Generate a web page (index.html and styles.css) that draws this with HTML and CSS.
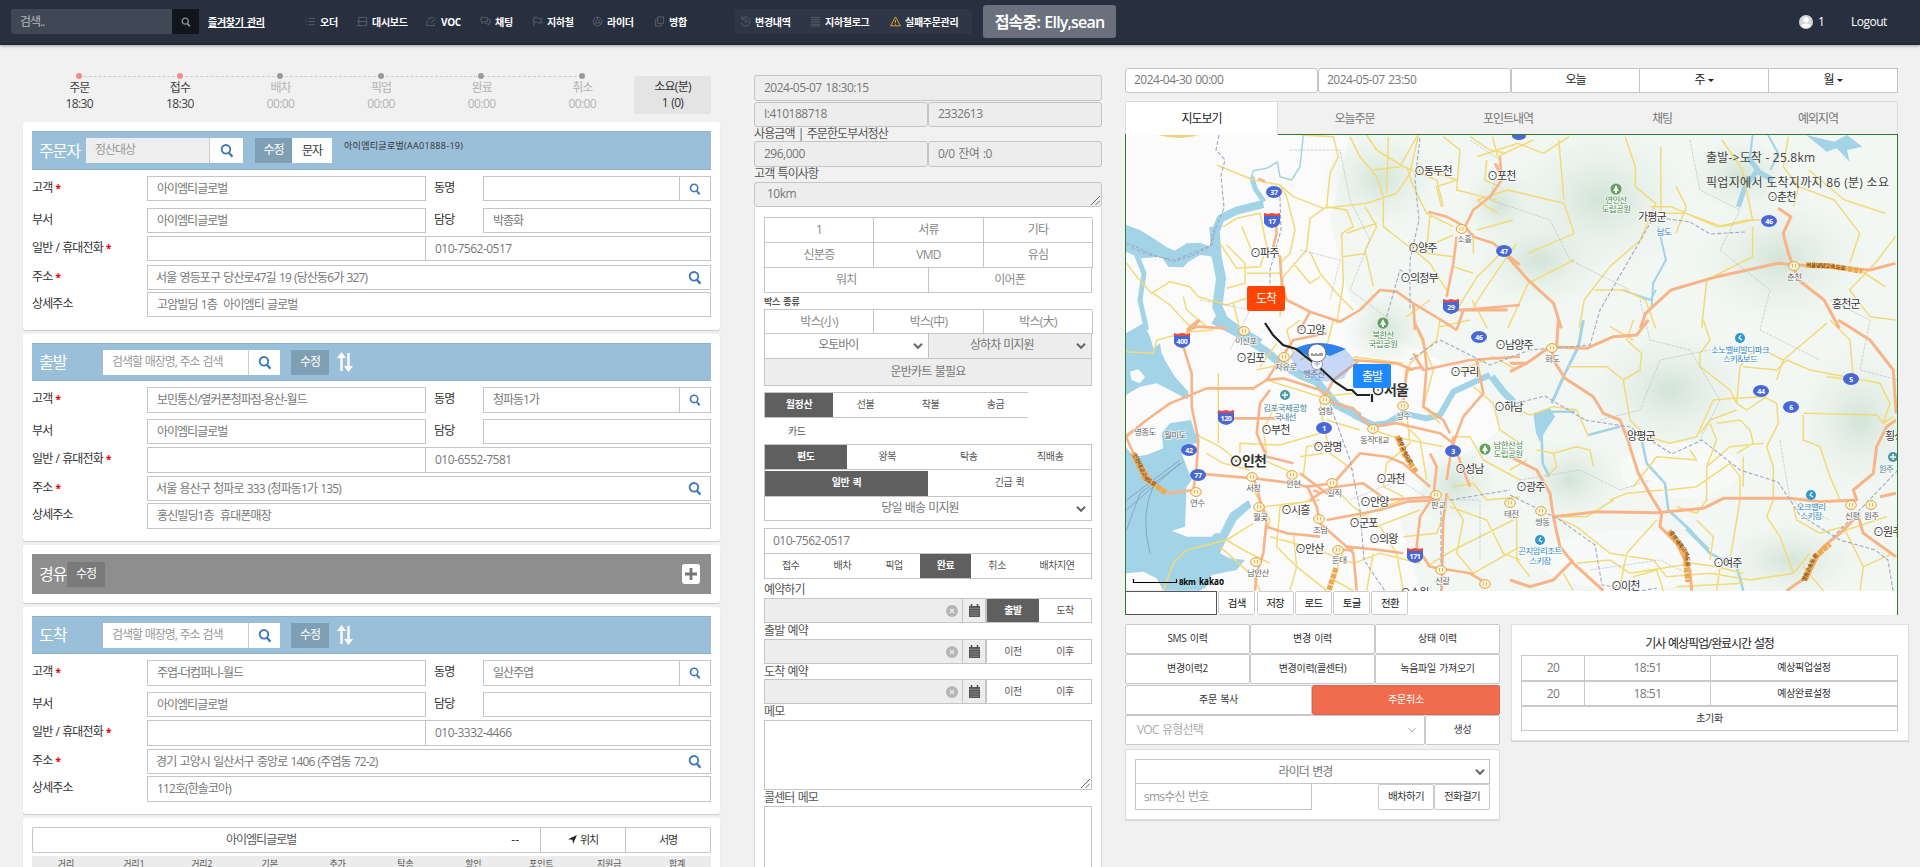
FILE: index.html
```html
<!DOCTYPE html>
<html lang="ko">
<head>
<meta charset="utf-8">
<title>주문 관리</title>
<link rel="stylesheet" href="styles.css">
</head>
<body>
<svg class="defs" width="0" height="0">
  <symbol id="mag" viewBox="0 0 16 16"><circle cx="6.8" cy="6.6" r="4.9" fill="none" stroke="currentColor" stroke-width="2.1"/><path d="M10.2 10.6L14.2 15" stroke="currentColor" stroke-width="2.6" fill="none"/></symbol>
  <symbol id="chev" viewBox="0 0 10 10"><path d="M1 2.8L5 6.8L9 2.8" fill="none" stroke="currentColor" stroke-width="2"/></symbol>
  <symbol id="swap" viewBox="0 0 16 20"><path d="M4.5 19V4M11.5 1V16" stroke="#fff" stroke-width="2.4" fill="none"/><path d="M0 6L4.5 0L9 6ZM7 14L11.5 20L16 14Z" fill="#fff"/></symbol>
  <symbol id="cal" viewBox="0 0 11 13"><path d="M0 2H11V13H0Z" fill="#555"/><path d="M2.5 0V3M8.5 0V3" stroke="#555" stroke-width="1.6"/><path d="M0 4.3H11M1 6.8H10M1 9H10M1 11.2H10" stroke="#aaa" stroke-width=".6"/></symbol>
  <symbol id="clr" viewBox="0 0 12 12"><circle cx="6" cy="6" r="6" fill="#b5b5b5"/><path d="M4 4L8 8M8 4L4 8" stroke="#eee" stroke-width="1.3"/></symbol>
  <symbol id="grip" viewBox="0 0 9 9"><path d="M0 9L9 0M4.5 9L9 4.5" stroke="#666" stroke-width="1" fill="none"/></symbol>
</svg>

<header class="top">
  <div class="top-search"><span>검색..</span><b><svg width="10" height="10"><use href="#mag"/></svg></b></div>
  <a class="fav">즐겨찾기 관리</a>
  <nav class="nav">
    <a><svg viewBox="0 0 12 12"><path d="M1 2.5H2M4 2.5H11M1 6H2M4 6H11M1 9.5H2M4 9.5H11"/></svg>오더</a>
    <a><svg viewBox="0 0 12 12"><path d="M2 1.5H10.500V10.500H2ZM0 6H11M0 10.500H2"/></svg>대시보드</a>
    <a><svg viewBox="0 0 12 12"><path d="M1 5V10.500H9V8M3 5V2H8M5 8L11 2.500"/></svg>VOC</a>
    <a><svg viewBox="0 0 12 12"><path d="M4.500 1.500H8V6H5L2 8V6H1V1.500ZM9 4H11V8H10V10L7 8H5"/></svg>채팅</a>
    <a><svg viewBox="0 0 12 12"><path d="M2 11V1.500H6L7 3H11L9.500 5L11 7.500H6L5 6.500H2"/></svg>지하철</a>
    <a><svg viewBox="0 0 12 12"><circle cx="6" cy="6" r="4.800"/><circle cx="6" cy="6" r="2"/><path d="M6 1V4M2 9L4.500 7M10 9L7.500 7"/></svg>라이더</a>
    <a><svg viewBox="0 0 12 12"><path d="M4 1H10.500V8H4ZM4 4H1.500V11H8V8"/></svg>병합</a>
  </nav>
  <nav class="nav sub">
    <a><svg viewBox="0 0 12 12"><path d="M2 3A5 5 0 1 1 1 7M2 0V3.500H5M6 3V6.500H8.500"/></svg>변경내역</a>
    <a><svg viewBox="0 0 12 12"><path d="M1 1.500H11M1 4H11M1 6.500H11M1 9H11M1 11H11"/></svg>지하철로그</a>
    <a class="warn"><svg viewBox="0 0 12 12"><path d="M6 1L11.300 10.700H.700ZM6 4.500V7.500M6 8.500V9.600"/></svg>실패주문관리</a>
  </nav>
  <div class="online">접속중: Elly,sean</div>
  <div class="user"><svg width="14" height="14" viewBox="0 0 14 14"><circle cx="7" cy="7" r="7" fill="#d5d7da"/><circle cx="7" cy="5" r="2.700" fill="#fff"/><path d="M2.500 11.500Q3 8.500 7 8.500Q11 8.500 11.500 11.500Q7 14 2.500 11.500Z" fill="#fff"/></svg>1</div>
  <div class="logout">Logout</div>
</header>

<main class="page">
<section class="left">
  <div class="steps">
    <div class="on"><i></i>주문<br><span>18:30</span></div>
    <div class="on"><i></i>접수<br><span>18:30</span></div>
    <div><i></i>배차<br><span>00:00</span></div>
    <div><i></i>픽업<br><span>00:00</span></div>
    <div><i></i>완료<br><span>00:00</span></div>
    <div><i></i>취소<br><span>00:00</span></div>
    <p>소요(분)<br>1 (0)</p>
  </div>

  <div class="card first">
    <div class="bar"><h2>주문자</h2>
      <div class="find gray"><span>정산대상</span><b><svg><use href="#mag"/></svg></b></div>
      <div class="edit">수정</div><div class="sms">문자</div><small>아이엠티글로벌(AA01888-19)</small></div>
    <div class="row r1"><label>고객 <em>*</em></label><div class="f a">아이엠티글로벌</div><label>동명</label><div class="f b"></div><div class="f s"><svg><use href="#mag"/></svg></div></div>
    <div class="row r2"><label>부서</label><div class="f a">아이엠티글로벌</div><label>담당</label><div class="f c">박종화</div></div>
    <div class="row r3"><label>일반 / 휴대전화 <em>*</em></label><div class="f a"></div><div class="f d n">010-7562-0517</div></div>
    <div class="row r4"><label>주소 <em>*</em></label><div class="f e">서울 영등포구 당산로47길 19 (당산동6가 327)<svg><use href="#mag"/></svg></div></div>
    <div class="row r5"><label>상세주소</label><div class="f e g">고암빌딩 1층&nbsp; 아이엠티 글로벌</div></div>
  </div>

  <div class="card">
    <div class="bar"><h2 class="w">출발</h2>
      <div class="find"><span>검색할 매장명, 주소 검색</span><b><svg><use href="#mag"/></svg></b></div>
      <div class="edit e2">수정</div><svg class="swap"><use href="#swap"/></svg></div>
    <div class="row r1"><label>고객 <em>*</em></label><div class="f a">보민통신/옆커폰청파점-용산-월드</div><label>동명</label><div class="f b">청파동1가</div><div class="f s"><svg><use href="#mag"/></svg></div></div>
    <div class="row r2"><label>부서</label><div class="f a">아이엠티글로벌</div><label>담당</label><div class="f c"></div></div>
    <div class="row r3"><label>일반 / 휴대전화 <em>*</em></label><div class="f a"></div><div class="f d n">010-6552-7581</div></div>
    <div class="row r4"><label>주소 <em>*</em></label><div class="f e">서울 용산구 청파로 333 (청파동1가 135)<svg><use href="#mag"/></svg></div></div>
    <div class="row r5"><label>상세주소</label><div class="f e g">홍신빌딩1층&nbsp; 휴대폰매장</div></div>
  </div>

  <div class="card via">
    <div class="bar grey"><h2>경유</h2><div class="edit">수정</div>
      <svg class="plus" viewBox="0 0 18 20"><rect width="18" height="20" rx="3" fill="#fff"/><path d="M9 4V16M3 10H15" stroke="#777" stroke-width="2.800"/></svg></div>
  </div>

  <div class="card">
    <div class="bar"><h2 class="w">도착</h2>
      <div class="find"><span>검색할 매장명, 주소 검색</span><b><svg><use href="#mag"/></svg></b></div>
      <div class="edit e2">수정</div><svg class="swap"><use href="#swap"/></svg></div>
    <div class="row r1"><label>고객 <em>*</em></label><div class="f a">주엽-더컴퍼니-월드</div><label>동명</label><div class="f b">일산주엽</div><div class="f s"><svg><use href="#mag"/></svg></div></div>
    <div class="row r2"><label>부서</label><div class="f a">아이엠티글로벌</div><label>담당</label><div class="f c"></div></div>
    <div class="row r3"><label>일반 / 휴대전화 <em>*</em></label><div class="f a"></div><div class="f d n">010-3332-4466</div></div>
    <div class="row r4"><label>주소 <em>*</em></label><div class="f e">경기 고양시 일산서구 중앙로 1406 (주엽동 72-2)<svg><use href="#mag"/></svg></div></div>
    <div class="row r5"><label>상세주소</label><div class="f e g">112호(한솔코아)</div></div>
  </div>

  <div class="card last">
    <div class="owner"><div class="nm">아이엠티글로벌</div><div class="dash">--</div><div class="bt"><svg width="9" height="9" viewBox="0 0 9 9"><path d="M9 0L5 9L4.500 4.800L0 4.200Z" fill="#222"/></svg> 위치</div><div class="bt">서명</div></div>
    <div class="cols"><span>거리</span><span>거리1</span><span>거리2</span><span>기본</span><span>추가</span><span>탁송</span><span>할인</span><span>포인트</span><span>지원금</span><span>합계</span></div>
  </div>
</section>

<section class="mid">
  <div class="ro n">2024-05-07 18:30:15</div>
  <div class="two"><div class="ro n">I:410188718</div><div class="ro n">2332613</div></div>
  <div class="lb l1">사용금액 | 주문한도부서정산</div>
  <div class="two t2"><div class="ro n">296,000</div><div class="ro n">0/0 잔여 :0</div></div>
  <div class="lb l2">고객 특이사항</div>
  <div class="ro n area0">10km<svg><use href="#grip"/></svg></div>
  <div class="panel">
    <div class="g3"><span>1</span><span>서류</span><span>기타</span><span>신분증</span><span>VMD</span><span>유심</span></div>
    <div class="g2"><span>워치</span><span>이어폰</span></div>
    <div class="tiny">박스 종류</div>
    <div class="g3 box"><span>박스(小)</span><span>박스(中)</span><span>박스(大)</span></div>
    <div class="sels"><div>오토바이<svg><use href="#chev"/></svg></div><div class="dis">상하차 미지원<svg><use href="#chev"/></svg></div></div>
    <div class="cart">운반카트 불필요</div>
    <div class="seg pay"><span class="k">월정산</span><span>선불</span><span>착불</span><span>송금</span></div>
    <div class="card-pay">카드</div>
    <div class="seg trip"><span class="k">편도</span><span>왕복</span><span>탁송</span><span>직배송</span></div>
    <div class="seg quick"><span class="k">일반 퀵</span><span>긴급 퀵</span></div>
    <div class="sel">당일 배송 미지원<svg><use href="#chev"/></svg></div>
    <div class="phone n">010-7562-0517</div>
    <div class="seg stat"><span>접수</span><span>배차</span><span>픽업</span><span class="k">완료</span><span>취소</span><span>배차지연</span></div>
    <div class="lb">예약하기</div>
    <div class="bk"><div class="inp"><svg class="c"><use href="#clr"/></svg></div><div class="cal"><svg><use href="#cal"/></svg></div><div class="seg"><span class="k">출발</span><span>도착</span></div></div>
    <div class="lb">출발 예약</div>
    <div class="bk"><div class="inp"><svg class="c"><use href="#clr"/></svg></div><div class="cal"><svg><use href="#cal"/></svg></div><div class="seg"><span>이전</span><span>이후</span></div></div>
    <div class="lb">도착 예약</div>
    <div class="bk"><div class="inp"><svg class="c"><use href="#clr"/></svg></div><div class="cal"><svg><use href="#cal"/></svg></div><div class="seg"><span>이전</span><span>이후</span></div></div>
    <div class="lb">메모</div>
    <div class="ta"><svg><use href="#grip"/></svg></div>
    <div class="lb">콜센터 메모</div>
    <div class="ta ta2"></div>
  </div>
</section>

<section class="right">
  <div class="dates"><div class="dt n">2024-04-30 00:00</div><div class="dt n">2024-05-07 23:50</div><div class="db">오늘</div><div class="db">주<i></i></div><div class="db">월<i></i></div></div>
  <div class="tabs"><span class="act">지도보기</span><span>오늘주문</span><span>포인트내역</span><span>채팅</span><span>예외지역</span></div>
  <div class="mapbox">
  <svg class="map" viewBox="1126 135 771 456">
    <defs>
      <radialGradient id="gr"><stop offset="0" stop-color="#d3e4d8"/><stop offset="1" stop-color="#e6f0e9" stop-opacity="0"/></radialGradient>
      <symbol id="jc" viewBox="0 0 12 10"><ellipse cx="6" cy="5" rx="5.300" ry="4.400" fill="#fff3d5" stroke="#d5a545"/><path d="M4.500 3V6.500M7.500 3V6.500" stroke="#d5a545" stroke-width=".8"/></symbol>
    </defs>
    <rect x="1125" y="134" width="773" height="457" fill="#fafbfa"/>
    <path d="M1350 134L1898 134V591H1420L1400 520L1440 470L1500 430L1480 380L1400 340L1350 300L1330 220Z" fill="#f2f7f3"/>
    <g fill="url(#gr)">
      <ellipse cx="1600" cy="200" rx="95" ry="75"/><ellipse cx="1380" cy="180" rx="60" ry="50"/><ellipse cx="1540" cy="260" rx="70" ry="50"/><ellipse cx="1670" cy="390" rx="85" ry="65"/><ellipse cx="1780" cy="260" rx="90" ry="65"/><ellipse cx="1860" cy="420" rx="65" ry="75"/><ellipse cx="1570" cy="480" rx="55" ry="45"/><ellipse cx="1384" cy="330" rx="42" ry="38"/><ellipse cx="1455" cy="485" rx="45" ry="40"/><ellipse cx="1790" cy="560" rx="70" ry="40"/><ellipse cx="1500" cy="205" rx="40" ry="40"/><ellipse cx="1740" cy="175" rx="55" ry="40"/>
    </g>
    <ellipse cx="1630" cy="560" rx="90" ry="30" fill="#fafbfa" opacity=".7"/><ellipse cx="1680" cy="470" rx="60" ry="28" fill="#fafbfa" opacity=".6"/>
    <path d="M1155 134Q1180 142 1202 134" fill="#ecd27a"/>

    <g transform="translate(1120 130) scale(.33333)" class="v" fill="none" stroke="#a2d3e6">
      <path fill="#a2d3e6" stroke="none" d="M18 285L60 300L100 325L140 352L165 362L200 340L240 338L272 350L272 378L240 375L205 395L190 412L145 410L125 380L60 385L18 365Z"/>
      <path stroke-width="8" d="M282 380L285 310L302 265L350 242L430 222"/><path stroke-width="5" d="M432 215L405 175L395 140"/>
      <path stroke-width="1.500" d="M395 140L400 122L440 115L472 96L480 140L515 150L540 110L550 15"/>
      <path stroke-width="10" d="M283 290L290 380L303 445L292 530L310 570L350 600L420 640"/><path stroke-width="5" d="M50 375L72 430L60 510L80 600"/>
      <path d="M20 340L60 355L100 375L160 395L220 375L270 350L285 290" stroke="#a08fb0" stroke-width=".8" stroke-dasharray="3 2"/>
    </g>
    <g transform="translate(1120 320) scale(.33333)" class="v" fill="none" stroke="#a2d3e6">
      <path fill="#a2d3e6" stroke="none" d="M18 40L70 10L90 50L100 85L120 70L125 100L140 130L165 170L205 215L200 255L225 340L240 345L230 370L200 375L185 400L200 440L215 480L200 500L195 620L155 632L200 650L275 650L305 615L330 580L385 540L395 560L350 600L318 660L300 700L330 715L375 720L350 750L275 765L260 800L240 812H18Z"/>
      <path fill="#fafbfa" stroke="none" d="M18 225L60 200L110 190L160 215L205 240L212 300L150 310L125 340L130 385L80 405L40 410L18 380ZM30 155L55 148L75 170L60 190L35 180ZM18 760L70 755L110 775L130 812H18ZM200 500L265 505L330 580L300 640L200 640Z"/>
      <path stroke-width="8" d="M280 0L350 38L440 95L480 130L540 165L590 185L650 255L720 290"/><path stroke-width="6" d="M700 285L760 315L800 310L850 280L920 295L960 285L1000 215L1080 178L1110 165"/><path stroke-width="7" d="M1115 170L1150 215L1180 245"/>
      <path d="M20 540L180 420M20 570L180 430M20 630L60 520L190 425M90 700Q60 580 100 500" stroke="#7f9cc0" stroke-width=".8"/>
    </g>
    <g transform="translate(1510 320) scale(.33333)" class="v" fill="none" stroke="#a2d3e6">
      <path stroke-width="3" d="M220 0L205 80L165 160L125 250"/><path fill="#a2d3e6" stroke="none" d="M70 280L120 265L135 290L105 335L90 365L78 340Z"/><path stroke-width="2.500" d="M95 350L98 430L118 470M125 275L195 275M235 345L330 320"/><path stroke-width="2.500" d="M395 360L410 430L465 490L475 570L540 630L600 700L680 740L700 812"/><path stroke-width="4" d="M530 625L595 690"/>
    </g>
    <g transform="translate(1120 0) scale(.5102 .33333)" class="v" fill="none" stroke="#a2d3e6">
      <path stroke-width="5" d="M1230 470L1250 510L1225 560L1212 620M1245 510L1280 540"/><path stroke-width="2" d="M1240 405L1235 470M1270 405L1290 460L1275 510"/><path fill="#a2d3e6" stroke="none" d="M1345 405L1400 425L1425 405L1455 440L1425 450L1430 485L1405 445L1385 455Z"/><path stroke-width="2" d="M985 870L1040 900L1050 870M1055 680L1070 780L1045 850L1042 920"/>
    </g>

    <g class="v yl" transform="translate(1120 130) scale(.33333)">
      <path d="M20 400L50 440L95 490L150 455L210 470L235 500L320 525L380 505M100 490L150 525L210 590M190 500L200 540L260 590M290 105L400 150L480 165L520 200L610 235L740 220L830 190L870 130L895 15M545 15L640 20L655 80L630 130L620 230L570 265L560 360L525 400L490 440L480 560M690 20L720 80L770 140L790 200L790 290L860 345L920 350L1000 315M740 15L770 60L850 110L950 150L970 230M800 190L805 20M860 110L880 170L920 250L1000 290M735 230L770 290L735 360L760 470M620 230L680 240L700 290L665 310L670 460L650 580M480 165L500 200L525 300L510 370L480 400M310 290L350 265L420 250L440 350L420 410L350 415L300 340M320 345L375 400L375 460L320 475M480 430L380 430M570 365L600 430L650 490L700 540M520 400L570 460L600 440M870 350L930 400L960 450L980 480M970 20L1020 60L1010 180L1130 210M1050 20L1110 60L1160 70M1100 90L1095 150L1140 170M890 20L840 110L760 120M930 250L920 370L1000 380M1060 310L1060 370M1190 340L1120 440L1060 530M770 280L680 310M670 380L740 370M340 520L360 600M365 290L395 360M1000 410L1060 430M860 560L930 510"/>
    </g>
    <g class="v yl" transform="translate(1120 320) scale(.33333)">
      <path d="M18 95L100 100L110 60L210 35L280 30M18 345L80 300M240 350L300 380L350 420L420 415L520 460M295 160L295 370M360 400L360 370L480 375L600 340M540 0L500 30L520 100L500 130L410 150M420 140L470 70M440 180L600 230L700 220M600 240L610 310L630 400L700 450M550 470L560 380L610 370M470 250L430 330L440 400M640 0L620 80L540 120M850 220L870 130L950 60L960 0M700 110L850 130M960 20L1050 0M1000 160L1120 110L1190 150M880 0L940 150L910 260L960 310M860 280L870 370L800 430L790 500L850 530M840 300L900 360L920 480M1060 200L1120 250L1140 330L1200 370M1000 350L1050 350L1090 420L1200 480M760 330L820 350L970 380M1000 500L1060 490L1100 540L1200 530M980 520L1030 600L1010 700L1060 760L1200 680M450 650L560 680L620 700L700 730M520 640L530 740L620 812M580 540L480 560L470 680L530 740L510 812M430 560L600 540M300 680L400 770L420 812M160 730L200 690L320 660L400 610M320 660L370 690L450 730M130 812L160 730M260 400L310 430L390 450M640 500L700 560L780 620L830 700L850 812M700 730L780 700L900 730M700 600L790 560L850 540M670 690L640 780L700 812M390 490L450 600L430 660M770 620L900 570M850 650L950 640L980 560M990 560L1100 600L1150 700L1200 720M920 740L1000 690L1180 600M620 300L720 330M610 400L540 410M760 700L740 812"/>
    </g>
    <g class="v yl" transform="translate(1510 320) scale(.33333)">
      <path d="M0 260L60 285L130 260L200 270L235 350M175 140L290 140L340 180L360 300L410 350L480 370L560 350L610 240L670 235L760 230L800 250L805 310L770 380L790 440L790 540L770 590L810 650L850 760M370 0L350 60L395 100L390 150L340 180M300 20L370 60M580 0L600 60L570 100L570 140L660 210L680 250L690 140L740 80L820 120L950 10M700 140L800 150L830 120L900 150L1110 190L1140 250L1120 310M960 0L1020 60L1030 180L950 170M800 180L820 120M880 280L1100 285L1120 310L1150 290M880 285L880 360L930 380L960 470L990 540M600 310L620 360L590 440L660 380L760 370M620 310L690 300L720 330L730 370L680 400M570 340L600 300L680 270M590 440L590 540L560 580L500 560M470 510L560 500L660 430L690 470L690 540L660 720M300 540L350 520L460 510M370 500L440 410L560 420L540 390M130 590L200 620L300 700L430 720L470 770L600 760L720 780L850 760L900 700M200 730L300 720L360 760L550 730L620 740L700 760M330 800L350 700L440 600M130 400L200 380L240 390L250 440M110 470L140 440L130 400L80 390M20 590L20 720L60 770M560 600L610 650L600 720M620 812L630 740M850 560L860 600L930 640L1000 620L1060 740L1050 812M880 740L940 812M1060 740L1150 700M370 770L440 750L460 812M680 250L710 270L770 230M150 590L230 590L310 540M0 450L50 420M700 410L700 500M980 640L1130 590M160 760L190 812M500 800L700 790"/>
    </g>
    <g class="v yl" transform="translate(1120 0) scale(.5102 .33333)">
      <path d="M700 470L780 430L830 460L880 410M730 410L740 470L810 420M740 640L700 600L760 570L870 610L890 700L800 760M870 600L860 420M990 410L1010 500L1010 560L1050 610L1020 720L960 800L910 900L900 985M1060 440L1060 560L1060 640L1110 640L1180 680L1240 660L1220 510L1180 420M1040 620L1080 620L1140 660L1170 680L1230 660L1270 660M1300 500L1330 560L1320 620M1300 500L1310 410M1240 680L1240 770L1150 840L1140 985M1090 560L1110 620L1090 700M1330 560L1400 600L1450 700L1430 790M1350 510L1420 600L1500 640M1520 710L1480 790L1430 870L1470 950L1520 960M1450 810L1500 860M690 900L720 985M930 870L990 870L1030 900L1050 985M760 740L700 830L660 930M890 780L800 850L760 985M700 690L770 660M630 620L620 560L660 540L600 510"/>
    </g>
    <g class="v or" transform="translate(1120 130) scale(.33333)">
      <path d="M465 250L470 310L460 350L480 380L485 460L500 510L570 545L660 575L720 540L780 480L830 485L880 520L980 580L1010 600M925 245L980 260L1035 290L1060 320L1120 340L1200 405M1035 290L1060 240L1110 200L1145 150L1140 80M1010 320L1000 400L980 500M880 520L885 600M1200 525L1030 540L1010 600M235 570L200 600M570 545L540 600M415 145L435 155"/>
    </g>
    <g class="v or" transform="translate(1120 320) scale(.33333)">
      <path d="M200 35L230 20L320 25M190 80L215 160L215 260L235 360L230 440L220 510L150 520L100 490L40 400L18 350L80 300L150 250L260 205L400 205L440 180L490 175L600 210L640 250L700 265L750 320L830 310L960 340L1000 370L1030 450L1050 500M230 460L400 475L520 490L560 500L640 490L720 400L800 410L850 430L930 500M330 295L500 295M560 495L590 560L600 610L680 680L700 700L710 812M400 470L420 540L440 600L430 700L410 760L405 812M540 460L620 520L650 500L730 490L800 540L950 530M620 600L780 570L860 545L960 540M930 400L950 440L940 530L900 590L890 680L930 740L1050 760L1100 790M680 680L780 690L850 700M885 10L910 60L920 140L910 260L970 300L990 340M880 150L830 130L700 120M880 100L910 150L1050 120L1200 110M850 240L860 150L910 140M980 520L970 600L965 812M440 620L500 640L600 650M570 540L600 520M450 210L420 250L410 340L440 410L520 430M440 180L520 60L620 40M610 240L640 180L720 120M240 0L210 30M0 355L18 350M1000 370L1030 290L1090 220L1070 120M1000 350L980 480M650 690L700 690M640 500L600 520L580 510"/>
    </g>
    <g class="v or big" transform="translate(1510 320) scale(.33333)">
      <path d="M0 155L50 130L120 80L230 85L310 50L380 45L415 0M125 80L130 120L165 175L250 230L280 280L330 300L350 350L385 460L430 540L455 580L450 620L500 670L540 750L545 812M145 0L140 80M0 410L80 450L120 520L130 590L260 575L440 578L580 565L640 535L840 535L930 545L1040 540L1030 510L1090 460L1100 380L1130 320L1158 300M1110 530L1158 520M985 0L1080 60L1150 150L1158 280M130 590L150 680L190 730L280 812M190 720L130 780L60 800L0 780M1040 590L990 640L940 680L890 770L830 812M1045 590L1060 640L1158 710M0 130L50 130"/>
    </g>
    <g class="v or big" transform="translate(1120 0) scale(.5102 .33333)">
      <path d="M760 770L800 840L850 910L865 985M1520 790L1470 810L1330 795L1290 790L1170 830L1080 870L1030 940L1020 985M1290 625L1315 650L1300 700L1310 760L1330 840L1380 900L1410 985M735 490L745 520M640 930L700 930L760 930"/>
    </g>
    <g class="v rail">
      <path d="M1219 135L1216 150L1225 160L1221 175L1224 208L1215 230L1212 245L1175 260L1150 255L1130 247" stroke="#888"/>
      <path d="M1420 138L1415 180L1419 220L1410 260L1410 310M1280 197L1281 230L1270 270L1270 300M1330 405L1350 460L1360 510L1364 560L1385 591M1441 505V591M1410 360L1440 340L1490 365L1530 350M1510 495L1560 520L1595 545L1602 585L1640 591L1657 588M1585 420L1630 427L1672 454L1702 440L1740 470L1778 482L1800 515L1840 540L1875 550L1888 560L1893 591M1380 340L1400 270L1425 285M1655 215L1600 310L1590 345L1530 350M1655 217L1690 222L1710 234L1745 232M1510 405L1545 396L1585 420M1898 470L1850 520L1830 540M1450 500L1510 490"/>
    </g>
    <g class="v bnd"><path d="M1290 150L1340 150L1350 200L1370 240L1350 290L1390 320M1470 140L1500 160L1490 200L1550 220L1570 260L1630 290M1690 140L1700 190L1740 210L1720 250L1770 290L1760 330L1820 360M1640 300L1650 340L1690 350L1720 400L1700 440M1780 440L1790 500L1830 520M1520 480L1580 470L1620 490L1650 480M1200 300L1250 310L1230 350M1350 500L1400 480L1430 500L1480 500L1480 560M1830 300L1870 320L1860 370L1898 380M1300 250L1340 260L1330 300M1600 420L1640 410L1660 360L1710 350M1590 570L1660 560L1690 575"/></g>

    <g class="shieldText">
      <g fill="#4a68d4"><ellipse cx="1274" cy="192" rx="8" ry="6"/><ellipse cx="1504" cy="251" rx="8" ry="6"/><ellipse cx="1769" cy="221" rx="8" ry="6"/><ellipse cx="1519" cy="136" rx="7" ry="4"/><ellipse cx="1479" cy="337" rx="8" ry="6"/><ellipse cx="1324" cy="428" rx="8" ry="6"/><ellipse cx="1189" cy="450" rx="8" ry="6"/><ellipse cx="1198" cy="475" rx="8" ry="6"/><ellipse cx="1453" cy="451" rx="8" ry="6"/><ellipse cx="1851" cy="379" rx="8" ry="6"/><ellipse cx="1761" cy="391" rx="8" ry="6"/><ellipse cx="1791" cy="407" rx="8" ry="6"/>
      <path id="sh" d="M1264 216H1280V223Q1278 227 1272 228Q1266 227 1264 223Z"/><use href="#sh" x="179" y="86"/><use href="#sh" x="-90" y="120"/><use href="#sh" x="-46" y="197"/><use href="#sh" x="143" y="335"/></g>
      <g fill="#e24a4a"><path id="st" d="M1264 213L1268 214L1272 213L1276 214L1280 213V216H1264Z"/><use href="#st" x="179" y="86"/><use href="#st" x="-90" y="120"/><use href="#st" x="-46" y="197"/><use href="#st" x="143" y="335"/></g>
      <text x="1274" y="195">37</text><text x="1272" y="224">17</text><text x="1504" y="254">47</text><text x="1769" y="224">46</text><text x="1451" y="310">29</text><text x="1182" y="344">400</text><text x="1226" y="421">120</text><text x="1415" y="559">171</text><text x="1479" y="340">46</text><text x="1324" y="431">1</text><text x="1189" y="453">42</text><text x="1198" y="478">77</text><text x="1453" y="454">3</text><text x="1851" y="382">5</text><text x="1761" y="394">44</text><text x="1791" y="410">6</text>
    </g>
    <g fill="#62a060"><circle cx="1616" cy="189" r="5.500"/><circle cx="1383" cy="323" r="5.500"/><circle cx="1485" cy="449" r="5.500"/></g>
    <g fill="#fff"><path d="M1616 185L1619 191H1617V193H1615V191H1613ZM1383 319L1386 325H1384V327H1382V325H1380ZM1485 445L1488 451H1486V453H1484V451H1482Z"/></g>
    <g fill="#3298cf"><circle cx="1740" cy="338" r="5"/><circle cx="1811" cy="495" r="5"/><circle cx="1540" cy="540" r="5"/></g><path d="M1741 335L1739 338L1742 340M1812 492L1810 495L1813 497M1541 537L1539 540L1542 542" fill="none" stroke="#fff" stroke-width="1.200"/>
    <g fill="#4f97a5"><circle cx="1285" cy="395" r="5"/><circle cx="1893" cy="457" r="5"/></g><path d="M1282 395H1288M1285 392V398M1890 457H1896M1893 454V460" stroke="#fff" stroke-width="1.300"/>
    <g><use href="#jc" x="1336" y="286" width="0" height="0"/><use href="#jc" x="1455" y="224" width="13" height="10"/><use href="#jc" x="1788" y="261" width="12" height="10"/><use href="#jc" x="1238" y="326" width="12" height="10"/><use href="#jc" x="1278" y="352" width="12" height="10"/><use href="#jc" x="1319" y="395" width="12" height="10"/><use href="#jc" x="1397" y="401" width="12" height="10"/><use href="#jc" x="1367" y="424" width="12" height="10"/><use href="#jc" x="1246" y="472" width="12" height="10"/><use href="#jc" x="1286" y="470" width="12" height="10"/><use href="#jc" x="1326" y="478" width="12" height="10"/><use href="#jc" x="1190" y="487" width="12" height="10"/><use href="#jc" x="1253" y="502" width="12" height="10"/><use href="#jc" x="1313" y="514" width="12" height="10"/><use href="#jc" x="1332" y="545" width="12" height="10"/><use href="#jc" x="1250" y="557" width="12" height="10"/><use href="#jc" x="1430" y="490" width="12" height="10"/><use href="#jc" x="1504" y="498" width="12" height="10"/><use href="#jc" x="1435" y="565" width="12" height="10"/><use href="#jc" x="1479" y="579" width="12" height="10"/><use href="#jc" x="1546" y="343" width="12" height="10"/><use href="#jc" x="1535" y="506" width="12" height="10"/><use href="#jc" x="1845" y="500" width="12" height="10"/><use href="#jc" x="1865" y="500" width="12" height="10"/></g>
    <g class="city">
      <text x="1414" y="175">⊙동두천</text><text x="1487" y="180">⊙포천</text><text x="1250" y="257">⊙파주</text><text x="1408" y="252">⊙양주</text><text x="1400" y="282">⊙의정부</text><text x="1767" y="201">⊙춘천</text><text x="1296" y="334">⊙고양</text><text x="1236" y="362">⊙김포</text><text x="1495" y="349">⊙남양주</text><text x="1450" y="376">⊙구리</text><text x="1494" y="411">⊙하남</text><text x="1261" y="434">⊙부천</text><text x="1313" y="451">⊙광명</text><text x="1376" y="483">⊙과천</text><text x="1455" y="473">⊙성남</text><text x="1281" y="514">⊙시흥</text><text x="1360" y="506">⊙안양</text><text x="1349" y="527">⊙군포</text><text x="1369" y="543">⊙의왕</text><text x="1295" y="553">⊙안산</text><text x="1516" y="491">⊙광주</text><text x="1713" y="567">⊙여주</text><text x="1611" y="590">⊙이천</text><text x="1873" y="536">⊙원주</text><text x="1400" y="597">⊙수원</text><text x="1638" y="221">가평군</text><text x="1832" y="308">홍천군</text><text x="1627" y="440">양평군</text><text x="1885" y="440">횡성</text>
      <text class="lg" x="1229" y="466">⊙인천</text><text class="lg" x="1371" y="395">⊙서울</text>
    </g>
    <g class="sm">
      <text x="1457" y="242">소흘</text><text x="1787" y="280">춘천</text><text x="1235" y="344">이산포</text><text x="1275" y="370">자유로</text><text x="1303" y="377">행주산</text><text x="1318" y="414">염창</text><text x="1396" y="419">성수</text><text x="1360" y="443">동작대교</text><text x="1246" y="491">서창</text><text x="1286" y="487">안현</text><text x="1327" y="496">일직</text><text x="1190" y="506">연수</text><text x="1253" y="520">월곶</text><text x="1313" y="533">조남</text><text x="1332" y="563">둔대</text><text x="1247" y="576">남안산</text><text x="1431" y="508">판교</text><text x="1504" y="517">태전</text><text x="1435" y="584">신갈</text><text x="1545" y="362">화도</text><text x="1535" y="525">쌍동</text><text x="1845" y="519">신평</text><text x="1864" y="519">원주</text><text x="1134" y="435">영종도</text><text x="1164" y="438">월미도</text>
    </g>
    <g class="poi">
      <g fill="#4a8a4a"><text x="1616" y="203">연인산</text><text x="1616" y="212">도립공원</text><text x="1383" y="338">북한산</text><text x="1383" y="347">국립공원</text><text x="1508" y="448">남한산성</text><text x="1508" y="457">도립공원</text></g>
      <g fill="#2f86bd"><text x="1740" y="353">소노벨비발디파크</text><text x="1740" y="362">스키&amp;보드</text><text x="1811" y="510">오크밸리</text><text x="1811" y="519">스키장</text><text x="1540" y="554">곤지암리조트</text><text x="1540" y="564">스키장</text><text x="1664" y="235">남도</text></g>
      <g fill="#417f93"><text x="1285" y="411">김포국제공항</text><text x="1285" y="420">국내선</text><text x="1886" y="472">원주</text></g>
    </g>
    <g class="hw">
      <path id="h1" d="M1806 265L1830 266L1862 271"/><path id="h2" d="M1133 453L1145 478L1166 493"/><path id="h3" d="M1397 436L1405 455L1416 472"/><path id="h4" d="M1669 531L1685 552L1688 582"/><path id="h5" d="M1805 580L1816 556L1830 544"/><path d="M1336 568L1329 590"/>
    </g>
    <g class="hwt"><text><textPath href="#h1">서울양양고속도로</textPath></text><text><textPath href="#h2">인천대교고속도로</textPath></text><text><textPath href="#h3">경부고속도로</textPath></text><text><textPath href="#h4">중부내륙고속도로</textPath></text><text><textPath href="#h5">영동고속도로</textPath></text></g>

    <path d="M1294 351Q1318 335 1346 350L1355 360L1344 378Q1318 388 1298 370L1290 357Z" fill="#5b8ff0" opacity=".32"/>
    <path d="M1294 349Q1318 337 1346 349L1330 356Q1318 350 1308 356Z" fill="#2f82ea"/>
    <path d="M1265 323L1273 335L1283 345L1296 349L1306 357L1318 366L1335 382L1347 390L1352 390L1357 395L1370 395M1372 394V402" fill="none" stroke="#222" stroke-width="2.200"/>
    <circle cx="1317" cy="364" r="5.500" fill="#fff" stroke="#777" stroke-width=".7"/><path d="M1317 361V367M1314 364H1320" stroke="#8ab5e8"/><circle cx="1317" cy="353" r="9" fill="#fff" stroke="#555" stroke-width=".8"/><path d="M1312 353V356M1314 354V356M1316 353V356M1318 354V356M1320 353V356M1322 353V356" stroke="#444"/>
    <path d="M1262 310H1272L1267 317Z" fill="#fff" opacity=".8"/>
    <rect x="1247" y="286" width="38" height="25" rx="2" fill="#ff4500"/><text class="pin" x="1266" y="303">도착</text>
    <rect x="1353" y="364" width="38" height="24" rx="2" fill="#1e88ff"/><text class="pin" x="1372" y="381">출발</text>
    <path d="M1133.500 579V582.500H1176.500V579" fill="none" stroke="#000" stroke-width="1.200"/><text class="km" x="1179" y="585">8km</text><text class="kk" x="1199" y="585" textLength="25" lengthAdjust="spacingAndGlyphs">kakao</text>
    <text class="info" x="1706" y="162" textLength="109">출발-&gt;도착 - 25.8km</text><text class="info" x="1706" y="187" textLength="183">픽업지에서 도착지까지 86 (분) 소요</text>
  </svg>
  <div class="tools"><div class="in"></div><span>검색</span><span>저장</span><span>로드</span><span>토글</span><span>전환</span></div>
  </div>

  <div class="lower">
    <div class="lc">
      <div class="b3"><span>SMS 이력</span><span>변경 이력</span><span>상태 이력</span><span>변경이력2</span><span>변경이력(콜센터)</span><span>녹음파일 가져오기</span></div>
      <div class="b2"><span>주문 복사</span><span class="red">주문취소</span></div>
      <div class="voc"><div>VOC 유형선택<svg viewBox="0 0 10 10"><path d="M1.500 3L5 7L8.500 3" fill="none" stroke="#aaa"/></svg></div><span>생성</span></div>
      <div class="rider">
        <div class="rs">라이더 변경<svg><use href="#chev"/></svg></div>
        <div class="rr"><div class="si">sms수신 번호</div><span>배차하기</span><span>전화걸기</span></div>
      </div>
    </div>
    <div class="rc">
      <h3>기사 예상픽업/완료시간 설정</h3>
      <div class="tm"><div>20</div><div>18:51</div><span>예상픽업설정</span><div>20</div><div>18:51</div><span>예상완료설정</span></div>
      <div class="reset">초기화</div>
    </div>
  </div>
</section>
</main>
</body>
</html>
```
FILE: styles.css
```css
*{box-sizing:border-box}
html,body{margin:0;height:867px;overflow:hidden}
body{background:#f1f1f1;font:12px/16px "Open Sans","Noto Sans CJK KR",sans-serif;color:#333;letter-spacing:-1px;word-spacing:1px;white-space:nowrap}
.defs{display:block;height:0}
h2,h3,p{margin:0;font-weight:400}
.n{letter-spacing:-.5px}

/* header */
.top{height:45px;background:#28303f;border-bottom:2px solid #232833;box-shadow:0 1px 3px rgba(0,0,0,.35);display:flex;align-items:center;color:#fff;padding-left:11px;position:relative}
.top-search{width:188px;height:25px;background:#414855;display:flex;align-items:center;justify-content:space-between;padding-left:9px;color:#b5b8bd;border-radius:2px}
.top-search b{width:27px;height:25px;background:#11151c;display:flex;align-items:center;justify-content:center;color:#8c8f95}
.fav{margin-left:9px;width:97px;font-size:10px;font-weight:700;text-decoration:underline;letter-spacing:-.3px}
.nav{display:grid;grid-template-columns:52px 69px 54px 52px 60px 62px 81px;font-size:10px;font-weight:700}
.nav a{display:flex;align-items:center;gap:4px;letter-spacing:-.3px}
.nav svg{width:11px;height:11px;fill:none;stroke:#5a616d;stroke-width:1}
.sub{grid-template-columns:70px 80px 75px;background:#2f3746;height:25px;width:237px;padding-left:5px;border-radius:3px}
.nav .warn svg{stroke:#f0ad2e}
.online{margin-left:11px;width:133px;height:33px;background:#6b717c;border-radius:3px;font-size:16px;font-weight:600;letter-spacing:-.8px;display:flex;align-items:center;justify-content:center}
.user{margin-left:683px;width:52px;display:flex;align-items:center;gap:5px}
.logout{font-size:12px;letter-spacing:-.5px}

.page{display:grid;grid-template-columns:697px 348px 785px;column-gap:34px;padding-left:23px}
.page .right{margin-left:-11px}

/* progress */
.steps{height:77px;padding-top:31px;display:flex;padding-left:6px;position:relative}
.steps div{width:100.600px;text-align:center;color:#b3b3b3;line-height:16px;padding-top:3.500px;position:relative}
.steps div span{letter-spacing:-.6px}
.steps div::before{content:"";position:absolute;left:50%;top:0;width:100%;border-top:1px dashed #ccc}
.steps div:nth-child(6)::before{display:none}
.steps i{position:absolute;left:47px;top:-3px;width:6px;height:6px;border-radius:50%;background:#9a9a9a;z-index:1}
.steps .on{color:#444}
.steps .on i{background:#f28b88}
.steps p{margin-left:auto;margin-right:9px;width:77px;height:38px;background:#e4e4e4;border-radius:2px;text-align:center;padding-top:3px;line-height:16px;color:#333;letter-spacing:-.7px}

/* cards */
.card{background:#fff;border-radius:3px;padding:9px 9px 0;height:207px;margin-bottom:4px;box-shadow:0 1px 1px rgba(0,0,0,.16)}
.card.first{height:208px}
.card.via{height:58px}
.card.last{height:60px}
.bar{height:38px;background:#9abfd9;border-top:1px solid #8fb1c8;border-bottom:1px solid #8fb1c8;display:flex;align-items:center;padding-left:7px;margin-bottom:6px}
.first .bar{height:39px}
.bar h2{color:#fff;font-size:16px;letter-spacing:-1px;width:47px}
.bar h2.w{width:64px}
.find{height:25px;display:flex;background:#fff;color:#999}
.find span{width:146px;padding:4px 0 0 9px;border-right:1px solid #ccc;letter-spacing:-1.100px}
.find.gray span{width:124px;background:#eee;letter-spacing:-1px}
.find b{width:31px;display:flex;align-items:center;justify-content:center;color:#3f78b5}
.find.gray b{width:33px}
.find svg{width:14px;height:15px}
.edit{margin-left:12px;width:37px;height:25px;background:#7f9fb4;color:#fff;text-align:center;line-height:24px}
.edit.e2{margin-left:11px;width:38px}
.sms{width:40px;height:25px;background:#fff;text-align:center;line-height:25px}
.bar small{font-size:9px;letter-spacing:.3px;margin:-10px 0 0 12px;color:#333;white-space:nowrap}
.swap{width:16px;height:20px;margin-left:8px}
.bar.grey{background:#8e8e8e;border-color:#8e8e8e;height:40px}
.bar.grey h2{width:28px}
.bar.grey .edit{margin-left:0;width:38px;background:#7a7a7a}
.plus{width:18px;height:20px;margin-left:auto;margin-right:11px}
.row{display:flex;color:#333}
.row label{width:115px;padding-top:4px;letter-spacing:-.9px}
.row em{color:#e00;font-style:normal;font-weight:700;font-size:10px}
.f{height:25px;border:1px solid #c5c5c5;background:#fff;padding:4px 0 0 9px;color:#777}
.f.n{padding-left:9px}
.r1,.r3,.r5{height:26px}.r2,.r4{height:25px}
.r1 .f,.r3 .f,.r5 .f{height:26px}
.r1{margin-bottom:6px}.r2,.r3,.r4{margin-bottom:3px}
.row.r3,.row.r4{margin-bottom:2.700px}
.first .row .f{height:25px}
.a{width:279px}
.a+label{width:57px;padding-left:8px}
.b{width:197px}
.s{width:31px;border-left:0;padding:5px 0 0 9px;color:#3f78b5}
.s svg{width:12px;height:14px}
.c{width:228px}
.d{width:285px;border-left:0}
.e{width:564px;padding-left:8px;letter-spacing:-.9px;display:flex;justify-content:space-between}
.e svg{width:14px;height:15px;margin-right:8px;color:#3f78b5}
.e.g{padding-left:9px}
.owner{display:flex;height:26px;border:1px solid #c5c5c5;border-radius:2px;line-height:24px;text-align:center;margin-bottom:3px}
.nm{width:457px;color:#555}
.dash{width:51px;text-align:left;padding-left:22px;letter-spacing:0}
.bt{width:85px;border-left:1px solid #c5c5c5;font-size:11px}
.cols{display:grid;grid-template-columns:repeat(10,1fr);background:#ececec;text-align:center;font-size:9px;letter-spacing:-.2px;height:30px;color:#555}

/* middle column */
.mid{padding-top:30px}
.ro{height:26px;border:1px solid #c5c5c5;border-radius:3px;background:#ededed;padding:4px 9px;color:#777;letter-spacing:-.5px}
.mid>.ro{margin-bottom:1px}
.two{display:grid;grid-template-columns:1fr 1fr}
.two .ro{height:25px;padding-top:3px}
.t2 .ro{height:26px;padding-top:4px}
.lb{height:16px;line-height:16px;color:#555;letter-spacing:-.9px}
.mid>.lb{height:14px;line-height:13px}.mid>.l2{height:15px;line-height:14px}
.mid>.area0{margin:0;height:25px;padding:3px 0 0 12px;position:relative}
.area0 svg,.ta svg{position:absolute;right:1px;bottom:1px;width:9px;height:9px}
.panel{background:#fff;border:1px solid #ddd;border-top:0;padding:10px 9px 0;height:662px}
.g3{display:grid;grid-template-columns:109px 110px 109px;border-top:1px solid #c5c5c5;border-left:1px solid #c5c5c5;color:#888}
.g2{display:grid;grid-template-columns:1fr 1fr;border-left:1px solid #c5c5c5;color:#888}
.g3 span,.g2 span{height:25px;border-right:1px solid #c5c5c5;border-bottom:1px solid #c5c5c5;text-align:center;line-height:23px;letter-spacing:-.7px}
.g3.box span{height:24px}
.tiny{font-size:9px;letter-spacing:-.2px;line-height:18px;height:16px;font-weight:600;color:#555}
.sels{display:grid;grid-template-columns:1fr 1fr;height:24px;border-left:1px solid #c5c5c5}
.sels div,.sel{position:relative;text-align:center;border-right:1px solid #c5c5c5;line-height:22px;color:#777;padding-right:16px}
.sels svg,.sel svg{position:absolute;right:5px;top:7px;width:10px;height:10px;color:#666}
.sels .dis{background:#ededed}
.cart{height:28px;border:1px solid #c5c5c5;background:#ededed;text-align:center;line-height:25px;color:#777;letter-spacing:-.8px;margin-bottom:6px}
.seg{display:flex;font-size:10px;letter-spacing:-.4px;color:#555;text-align:center;line-height:23px}
.seg span{flex:1}
.seg .k{background:#5f5f5f;color:#fff;font-weight:700}
.pay{width:264px;height:26px;border:1px solid #c5c5c5;border-right:0}
.pay .k{flex:0 0 68px}
.card-pay{font-size:10px;height:26px;line-height:26px;padding-left:24px;color:#555;letter-spacing:-.4px}
.trip{height:26px;border:1px solid #c5c5c5}
.quick{height:26px;border-left:1px solid #c5c5c5;border-right:1px solid #c5c5c5;padding-top:1px}
.sel{height:25px;border:1px solid #c5c5c5;margin-bottom:7px;letter-spacing:-.9px}
.phone{height:26px;border:1px solid #c5c5c5;padding:4px 8px;color:#777}
.stat{height:25px;border:1px solid #c5c5c5;border-top:0;margin-bottom:3px}
.stat span{flex:0 0 51.600px}.stat span:last-child{flex:1}
.bk{display:flex;height:25px}
.inp{width:199px;background:#ededed;border:1px solid #c5c5c5;padding:6px 4px 0;text-align:right}
.inp svg{width:12px;height:12px;display:block;margin-left:auto}
.cal{width:23px;background:#ededed;border:1px solid #c5c5c5;border-left:0;padding:5px 0 0 6px;display:flex}
.cal svg{width:11px;height:13px}
.bk .seg{width:106px;border:1px solid #c5c5c5}
.ta{height:70px;border:1px solid #c5c5c5;position:relative}
.bk+.lb{height:15.700px}
.ta2{height:70px}

/* right column */
.right{padding-top:23px}
.dates{display:grid;grid-template-columns:193px 193px 129px 129px 129px;width:773px}
.dt,.db{height:25px;background:#fff;border:1px solid #c5c5c5;border-radius:3px;padding:3px 8px;color:#777}
.db{border-radius:0;text-align:center;color:#222}
.db+.db{border-left:0}
.db i{display:inline-block;border:3px solid transparent;border-top-color:#222;border-bottom:0;margin:0 0 2px 3px}
.tabs{display:grid;grid-template-columns:152px 153px 154px 154px 1fr;width:773px;height:33px;margin-top:8px;border:1px solid #dcdcdc;border-bottom:0;text-align:center;line-height:33px;color:#777}
.tabs .act{background:#fff;color:#222;border-right:1px solid #dcdcdc}
.mapbox{width:773px;border:1px solid #2c7d2f;border-bottom:0;background:#fff;height:481px}
.map{display:block;width:771px;height:456px}
.v path{vector-effect:non-scaling-stroke;stroke-linejoin:round;fill:none}
g.v path[fill="#a2d3e6"]{fill:#a2d3e6}
g.v path[fill="#fafbfa"]{fill:#fafbfa}
.yl path{stroke:#f3da78;stroke-width:1.500}
.or path{stroke:#f8b486;stroke-width:2.600}
.big path{stroke-width:3}
.rail path{stroke:#a3a8c4;stroke-width:1.100;stroke-dasharray:4 2}
.bnd path{stroke:#bcc6c1;stroke-width:.7;stroke-dasharray:3 1}
.shieldText text{font:700 7px "Open Sans",sans-serif;fill:#fff;text-anchor:middle;letter-spacing:-.3px}
.city text{font-size:11px;fill:#333;letter-spacing:-.9px;paint-order:stroke;stroke:#fff;stroke-width:1.500px}
.city .lg{font-size:14px;font-weight:600;letter-spacing:-1px}
.sm text,.poi text{font-size:8.500px;fill:#666;letter-spacing:-.6px;paint-order:stroke;stroke:#fff;stroke-width:1.200px}
.poi text{fill:inherit;text-anchor:middle}
.hw path{fill:none;stroke:#eda94f;stroke-width:5.500;stroke-dasharray:5 1}
.hwt text{font-size:5.500px;font-weight:700;fill:#8a5215;letter-spacing:-.2px;transform:translateY(2px)}
.pin{font-size:12px;fill:#fff;text-anchor:middle}
.km{font-size:8px;font-weight:700;letter-spacing:-.3px}
.kk{font-size:10px;font-weight:700;letter-spacing:0}
.info{font-size:12px;fill:#444;letter-spacing:0;word-spacing:0}
.tools{display:flex;height:24px;align-items:stretch}
.tools .in{width:91px;border:1px solid #555;border-left:0}
.tools span{width:37px;margin-left:1.300px;border:1px solid #ccc;border-radius:2px;text-align:center;font-size:10.500px;line-height:22px;color:#111;letter-spacing:-.7px}
.lower{display:grid;grid-template-columns:375px 398px;column-gap:11px;align-items:start;margin-top:9px}
.b3{display:grid;grid-template-columns:1fr 1fr 1fr}
.b3 span,.b2 span,.voc>*{height:30px;background:#fff;border:1px solid #c9c9c9;border-radius:2px;text-align:center;font-size:10px;letter-spacing:-.3px;line-height:26px;color:#333}
.b2{display:grid;grid-template-columns:187px 188px;margin-top:1px}
.b2 .red{background:#f06c4e;border-color:#d8664c;color:#fff}
.voc{display:grid;grid-template-columns:300px 75px}
.voc div{font-size:12px;text-align:left;padding-left:11px;color:#aaa;display:flex;justify-content:space-between;letter-spacing:-.8px;line-height:28px}
.voc svg{width:10px;margin-right:7px}
.rider{margin-top:4px;background:#fff;border-radius:2px;border:1px solid #ddd;box-shadow:0 1px 1px rgba(0,0,0,.1);height:71px;padding:9px 9px 0}
.rs{height:25px;border:1px solid #c5c5c5;text-align:center;line-height:23px;color:#777;position:relative;padding-right:14px;letter-spacing:-.9px}
.rs svg{position:absolute;right:4px;top:7px;width:10px;height:10px;color:#666}
.rr{display:flex;height:26px}
.si{width:177px;border:1px solid #c5c5c5;border-top:0;padding:5px 8px;color:#999;margin-right:auto;letter-spacing:-.8px}
.rr span{width:56px;border:1px solid #ccc;border-radius:2px;text-align:center;font-size:10.500px;line-height:23px;letter-spacing:-.6px}
.rc{height:117px;background:#fff;border:1px solid #e0e0e0;box-shadow:0 1px 1px rgba(0,0,0,.12);padding:11px 10px 0 9px}
.rc h3{text-align:center;font-size:12px;line-height:16px;margin-bottom:3px;letter-spacing:-1.100px;color:#222}
.tm{display:grid;grid-template-columns:63px 126px 188px;text-align:center;line-height:24px;color:#777;letter-spacing:-.5px}
.tm>*{height:25.500px;border:1px solid #c9c9c9;margin-right:-1px}
.tm span,.reset{font-size:10px;color:#333;letter-spacing:-.3px}
.tm span{margin-right:0;line-height:22px}
.reset{height:25px;border:1px solid #c9c9c9;text-align:center;line-height:22px}
```
